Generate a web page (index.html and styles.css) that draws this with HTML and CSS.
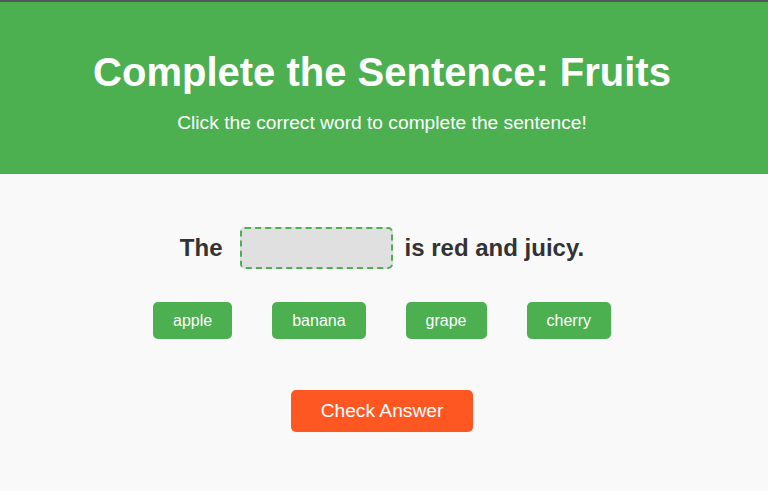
FILE: index.html
```html
<!DOCTYPE html>
<html lang="en">
<head>
<meta charset="utf-8">
<title>Complete the Sentence: Fruits</title>
<link rel="stylesheet" href="styles.css">
</head>
<body>
<header class="header">
  <h1 class="title">Complete the Sentence: Fruits</h1>
  <p class="subtitle">Click the correct word to complete the sentence!</p>
</header>
<main class="main">
  <div class="sentence">The <span class="blank"></span> is red and juicy.</div>
  <div class="options">
    <button class="option">apple</button>
    <button class="option">banana</button>
    <button class="option">grape</button>
    <button class="option">cherry</button>
  </div>
  <button class="check">Check Answer</button>
</main>
</body>
</html>
```
FILE: styles.css
```css
html, body {
  margin: 0;
  padding: 0;
}
body {
  font-family: "Liberation Sans", Arial, sans-serif;
  background: #f9f9f9;
  color: #333;
  border-top: 2px solid #4f565c;
  min-height: 489px;
}
.header {
  background: #4CAF50;
  color: #fff;
  text-align: center;
  padding: 20px 24px 20px 20px;
  height: 132px;
}
.title {
  margin: 28px 0 0;
  font-size: 40px;
  font-weight: bold;
}
.subtitle {
  margin: 17px 0 0;
  font-size: 19.2px;
}
.main {
  display: flex;
  flex-direction: column;
  align-items: center;
  padding-top: 53px;
  padding-right: 4px;
}
.sentence {
  font-size: 24px;
  font-weight: bold;
  color: #333;
  display: flex;
  align-items: center;
}
.blank {
  display: inline-block;
  width: 149px;
  height: 38px;
  margin: 0 12px 0 17px;
  background: #e0e0e0;
  border: 2px dashed #4CAF50;
  border-radius: 5px;
}
.options {
  display: flex;
  gap: 40px;
  margin-top: 33px;
}
.option {
  font-family: "Liberation Sans", Arial, sans-serif;
  font-size: 16px;
  color: #fff;
  background: #4CAF50;
  border: none;
  border-radius: 5px;
  padding: 10px 20px;
  height: 37px;
}
.check {
  margin-top: 51px;
  font-family: "Liberation Sans", Arial, sans-serif;
  font-size: 19.2px;
  color: #fff;
  background: #FF5722;
  border: none;
  border-radius: 5px;
  padding: 10px 30px;
  height: 42px;
}
```
